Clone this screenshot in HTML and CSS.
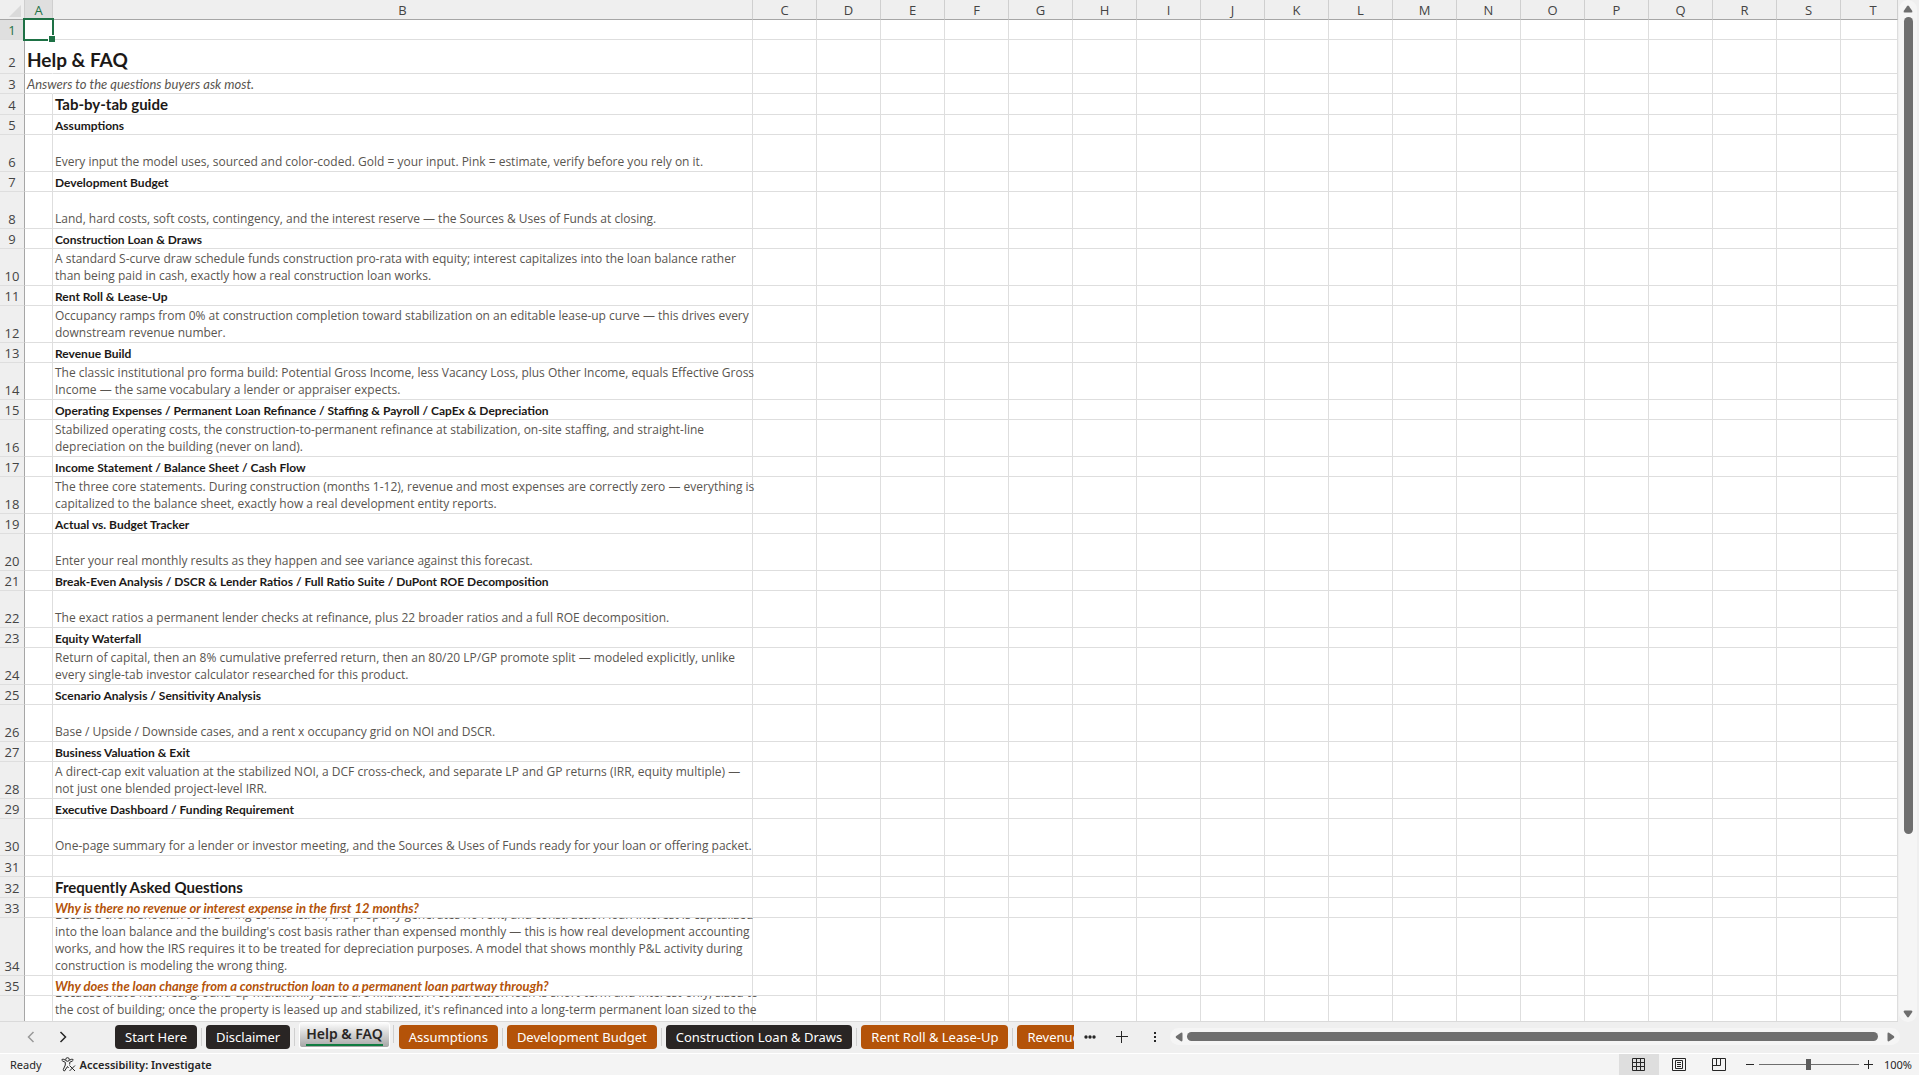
FILE: index.html
```html
<!DOCTYPE html>
<html lang="en">
<head>
<meta charset="utf-8">
<title>Help &amp; FAQ</title>
<link rel="stylesheet" href="styles.css">
</head>
<body>
<main class="workspace">
  <div class="sheet">
    <table class="grid">
      <colgroup id="cols"><col class="col-num"><col class="col-a"><col class="col-b"></colgroup>
      <thead><tr id="head"></tr></thead>
      <tbody id="rows"></tbody>
    </table>
  </div>
  <div class="vscroll">
    <button class="arrow" aria-label="Scroll up"><svg width="10" height="8" viewBox="0 0 10 8"><path d="M4 1.2Q5 0 6 1.2L9.300 6Q9.800 7.500 8.300 7.500H1.700Q.2 7.500.7 6Z"/></svg></button>
    <div class="vtrack"><div class="vthumb"></div></div>
    <button class="arrow" aria-label="Scroll down"><svg width="10" height="8" viewBox="0 0 10 8"><path d="M4 6.800Q5 8 6 6.800L9.300 2Q9.800.5 8.300.5H1.700Q.2.5.7 2Z"/></svg></button>
  </div>
</main>
<nav class="tabbar" aria-label="Sheets">
  <div class="tabnav">
    <button class="plain dim" aria-label="Previous sheets"><svg width="8" height="12" viewBox="0 0 8 12"><path d="M6.500 1L1.500 6L6.500 11"/></svg></button>
    <button class="plain" aria-label="Next sheets"><svg width="8" height="12" viewBox="0 0 8 12"><path d="M1.500 1L6.500 6L1.500 11"/></svg></button>
  </div>
  <div class="tabs">
    <button class="tab dark">Start Here</button>
    <button class="tab dark">Disclaimer</button>
    <button class="tab active"><span>Help &amp; FAQ</span></button>
    <button class="tab rust">Assumptions</button>
    <button class="tab rust">Development Budget</button>
    <button class="tab dark">Construction Loan &amp; Draws</button>
    <button class="tab rust">Rent Roll &amp; Lease-Up</button>
    <button class="tab rust">Revenue Build</button>
  </div>
  <div class="tabtools">
    <button class="plain" aria-label="More sheets"><svg width="12" height="4" viewBox="0 0 12 4"><g class="fill"><circle cx="2" cy="2" r="1.700"/><circle cx="6" cy="2" r="1.700"/><circle cx="10" cy="2" r="1.700"/></g></svg></button>
    <button class="plain" aria-label="New sheet"><svg width="12" height="12" viewBox="0 0 12 12"><path d="M5.500 0V12M0 5.500H12"/></svg></button>
    <button class="plain grip" aria-label="Resize tab bar"><svg width="2" height="12" viewBox="0 0 2 12"><path class="fill" d="M0 1h2v2H0zM0 5h2v2H0zM0 9h2v2H0z"/></svg></button>
  </div>
  <div class="hscroll">
    <button class="arrow" aria-label="Scroll left"><svg width="8" height="10" viewBox="0 0 8 10"><path d="M1.200 4Q0 5 1.200 6L6 9.300Q7.500 9.800 7.500 8.300V1.700Q7.500.2 6 .7Z"/></svg></button>
    <div class="hthumb"></div>
    <button class="arrow" aria-label="Scroll right"><svg width="8" height="10" viewBox="0 0 8 10"><path d="M6.800 4Q8 5 6.800 6L2 9.300Q.5 9.800.5 8.300V1.700Q.5.2 2 .7Z"/></svg></button>
  </div>
</nav>
<footer class="status">
  <span class="ready">Ready</span>
  <button class="access"><svg width="15" height="15" viewBox="0 0 15 15"><circle cx="6.500" cy="2.500" r="1.800"/><path d="M4.700 3.200L2.200 2.200Q.8 2 .8 3.200Q.9 3.900 4.300 5.300V8L2.300 12.500Q2.200 14 3.500 14L6.500 9.500L7.500 11M8.300 3.200L10.800 2.200Q12.200 2 12.200 3.200Q12.100 3.900 8.700 5.300V7.500M8.500 8.500L14 14M14 8.500L8.500 14"/></svg>Accessibility: Investigate</button>
  <div class="views">
    <button class="view on" aria-label="Normal view"><svg width="13" height="13" viewBox="0 0 13 13"><path d="M.5.5H12.500V12.500H.5ZM4.500.5V12.500M8.500.5V12.500M.5 4.500H12.500M.5 8.500H12.500"/></svg></button>
    <button class="view" aria-label="Page layout"><svg width="14" height="13" viewBox="0 0 14 13"><path d="M.5.5H13.500V12.500H.5ZM3.500 2.500H10.500V10.500H3.500ZM5 4.500H9M5 6.500H9M5 8.500H9"/></svg></button>
    <button class="view" aria-label="Page break preview"><svg width="14" height="13" viewBox="0 0 14 13"><path d="M.5.5H13.500V12.500H.5ZM.5 7.500H8.500V.5M4.500.5V7.500"/></svg></button>
  </div>
  <div class="zoom">
    <button class="plain" aria-label="Zoom out"><svg width="8" height="9" viewBox="0 0 8 9"><path d="M0 4.500H8"/></svg></button>
    <input type="range" min="0" max="100" value="50" aria-label="Zoom">
    <button class="plain" aria-label="Zoom in"><svg width="9" height="9" viewBox="0 0 9 9"><path d="M0 4.500H9M4.500 0V9"/></svg></button>
    <button class="pct">100%</button>
  </div>
</footer>
<script src="sheet.js"></script>
</body>
</html>
```
FILE: styles.css
```css
* { box-sizing: border-box; }
html, body { height: 100%; }
body {
  margin: 0;
  display: flex;
  flex-direction: column;
  overflow: hidden;
  background: #efefef;
  color: #262626;
  font-family: "Noto Sans", "Open Sans", sans-serif;
}
button {
  border: 0;
  padding: 0;
  margin: 0;
  background: none;
  color: inherit;
  font: inherit;
  display: flex;
  align-items: center;
  justify-content: center;
}
svg { display: block; fill: none; stroke: #262626; flex: none; }
svg .fill { fill: #262626; stroke: none; }

.workspace { flex: 1; min-height: 0; display: flex; }
.sheet { flex: 1; min-width: 0; overflow: hidden; border-bottom: 1px solid #dadada; }

.grid {
  width: 100%;
  table-layout: fixed;
  border-collapse: separate;
  border-spacing: 0;
  background: #fff;
  font-family: Lato, sans-serif;
}
.col-num { width: 25px; }
.col-a { width: 28px; }
.col-b { width: 700px; }
.col-std { width: 64px; }
.grid th, .grid td { padding: 0; border-right: 1px solid #dedede; border-bottom: 1px solid #dedede; }
.grid th { background: #efefef; font-family: "Open Sans", sans-serif; font-weight: 400; font-size: 13px; color: #444; }
.grid thead th {
  height: 20px;
  padding-top: 2px;
  line-height: 17px;
  border-bottom-color: #a6a6a6;
  border-right-color: #cfcfcf;
}
.grid thead th:last-child { padding-left: 8px; }
.grid tbody th { border-right-color: #a6a6a6; vertical-align: bottom; line-height: 18px; }
.grid tbody .title th { padding-bottom: 2px; }
.grid .sel { background: #dfdfdf; color: #1e7145; }
.corner svg { margin-left: auto; margin-right: 3px; fill: #dadada; stroke: none; }

.cell {
  height: 19px;
  padding-left: 2px;
  display: flex;
  align-items: flex-end;
  overflow-x: visible;
  overflow-y: clip;
  white-space: nowrap;
  font-size: 12px;
  line-height: 17px;
  color: #595550;
}
.h20 .cell { height: 20px; }
.h33 .cell { height: 33px; }
.h36 .cell { height: 36px; }
.h57 .cell { height: 57px; }
.h36 .cell, .h57 .cell { padding-bottom: 1px; font-family: "Open Sans", sans-serif; }
.title .cell { font-size: 19px; line-height: 26px; font-weight: 700; color: #1c1917; }
.note .cell { font-size: 13px; font-style: italic; }
.section .cell { font-size: 15px; line-height: 19px; font-weight: 700; color: #1c1917; }
.sub .cell { font-weight: 700; color: #1c1917; }
.faq .cell { font-size: 13px; font-weight: 700; font-style: italic; color: #b45309; }
.title td:nth-child(2), .note td:nth-child(2) { border-right-color: transparent; }
.title td:nth-child(2) .cell, .note td:nth-child(2) .cell { width: 0; }

.current { position: relative; }
.cursor {
  position: absolute;
  inset: -2px -2px -2px -2px;
  border: 2px solid #1e7145;
}
.cursor::after {
  content: "";
  position: absolute;
  right: -3px;
  bottom: -3px;
  width: 6px;
  height: 6px;
  background: #1e7145;
  border: solid #fff;
  border-width: 1px 0 0 1px;
}

.vscroll { width: 21px; padding: 0 2px 0 1px; display: flex; flex-direction: column; }
.arrow { flex: none; }
.arrow svg { fill: #6e6e6e; stroke: none; }
.vscroll .arrow { height: 17px; background: #f5f5f5; }
.vscroll .arrow:first-child { border-radius: 9px 9px 0 0; }
.vscroll .arrow:last-child { border-radius: 0 0 9px 9px; }
.vtrack { flex: 1; background: #f5f5f5; display: flex; justify-content: center; }
.vthumb { width: 9px; height: calc(83% - 3px); border-radius: 5px; background: #6e6e6e; }

.tabbar { height: 31px; flex: none; display: flex; align-items: flex-start; }
.tabnav { width: 110px; height: 30px; flex: none; padding-left: 27px; display: flex; align-items: center; gap: 24px; }
.tabnav svg { stroke-width: 1.500; }
.dim svg { stroke: #999; }
.tabs { flex: 0 1 964px; min-width: 0; height: 31px; overflow: hidden; display: flex; }
.tab {
  flex: none;
  height: 24px;
  margin: 3px 4px 0 5px;
  padding: 0 10px;
  border-radius: 4px;
  position: relative;
  font-size: 13px;
  white-space: nowrap;
  color: #fff;
}
.tab::after { content: ""; position: absolute; right: -5px; top: 3px; width: 1px; height: 18px; background: #cfcfcf; }
.dark { background: #292524; }
.rust { background: #b45309; }
.active {
  height: 27px;
  margin-top: 0;
  padding: 0 6px 1px;
  align-items: flex-end;
  border: solid #fff;
  border-width: 0 1px 2px;
  background: linear-gradient(#fff, #a6a6a6);
  color: #292524;
  font-size: 14px;
  font-weight: 600;
}
.active span { border-bottom: 2px solid #107c41; line-height: 20px; }
.tabtools { width: 96px; height: 30px; flex: none; padding-left: 10px; display: flex; align-items: center; gap: 20px; }
.grip { margin-left: 6px; }
.hscroll {
  flex: 1;
  height: 17px;
  margin: 6px 19px 0 0;
  padding: 0 5px;
  border-radius: 9px;
  background: #f5f5f5;
  display: flex;
  align-items: center;
  gap: 4px;
}
.hthumb { flex: 1; height: 9px; border-radius: 5px; background: #6e6e6e; }
.hscroll .arrow:last-child { margin-left: 5px; }

.status {
  height: 22px;
  flex: none;
  padding: 0 7px 0 10px;
  border-top: 1px solid #fff;
  background: #f4f4f4;
  display: flex;
  align-items: center;
  font-size: 11px;
}
.access { margin-left: 19px; gap: 4px; font-weight: 600; }
.views { height: 21px; margin-left: auto; display: flex; }
.view { width: 40px; }
.on { background: #dedede; }
.zoom { margin-left: 7px; display: flex; align-items: center; gap: 5px; }
.zoom input {
  appearance: none;
  width: 100px;
  height: 11px;
  margin: 0;
  background: linear-gradient(#6e6e6e, #6e6e6e) center / 100% 1px no-repeat;
}
.zoom input::-webkit-slider-thumb { appearance: none; width: 5px; height: 11px; background: #5c5c5c; }
.pct { margin-left: 6px; }
```
FILE: sheet.js
```js
const LETTERS = "ABCDEFGHIJKLMNOPQRST".split("");

// Each row: [row class, text of column A, text of column B]
const ROWS = [
  ["", "", ""],
  ["title h33", "Help &amp; FAQ", ""],
  ["note", "Answers to the questions buyers ask most.", ""],
  ["section h20", "", "Tab-by-tab guide"],
  ["sub", "", "Assumptions"],
  ["h36", "", "Every input the model uses, sourced and color-coded. Gold = your input. Pink = estimate, verify before you rely on it."],
  ["sub", "", "Development Budget"],
  ["h36", "", "Land, hard costs, soft costs, contingency, and the interest reserve — the Sources &amp; Uses of Funds at closing."],
  ["sub", "", "Construction Loan &amp; Draws"],
  ["h36", "", "A standard S-curve draw schedule funds construction pro-rata with equity; interest capitalizes into the loan balance rather<br>than being paid in cash, exactly how a real construction loan works."],
  ["sub", "", "Rent Roll &amp; Lease-Up"],
  ["h36", "", "Occupancy ramps from 0% at construction completion toward stabilization on an editable lease-up curve — this drives every<br>downstream revenue number."],
  ["sub", "", "Revenue Build"],
  ["h36", "", "The classic institutional pro forma build: Potential Gross Income, less Vacancy Loss, plus Other Income, equals Effective Gross<br>Income — the same vocabulary a lender or appraiser expects."],
  ["sub", "", "Operating Expenses / Permanent Loan Refinance / Staffing &amp; Payroll / CapEx &amp; Depreciation"],
  ["h36", "", "Stabilized operating costs, the construction-to-permanent refinance at stabilization, on-site staffing, and straight-line<br>depreciation on the building (never on land)."],
  ["sub", "", "Income Statement / Balance Sheet / Cash Flow"],
  ["h36", "", "The three core statements. During construction (months 1-12), revenue and most expenses are correctly zero — everything is<br>capitalized to the balance sheet, exactly how a real development entity reports."],
  ["sub", "", "Actual vs. Budget Tracker"],
  ["h36", "", "Enter your real monthly results as they happen and see variance against this forecast."],
  ["sub", "", "Break-Even Analysis / DSCR &amp; Lender Ratios / Full Ratio Suite / DuPont ROE Decomposition"],
  ["h36", "", "The exact ratios a permanent lender checks at refinance, plus 22 broader ratios and a full ROE decomposition."],
  ["sub", "", "Equity Waterfall"],
  ["h36", "", "Return of capital, then an 8% cumulative preferred return, then an 80/20 LP/GP promote split — modeled explicitly, unlike<br>every single-tab investor calculator researched for this product."],
  ["sub", "", "Scenario Analysis / Sensitivity Analysis"],
  ["h36", "", "Base / Upside / Downside cases, and a rent x occupancy grid on NOI and DSCR."],
  ["sub", "", "Business Valuation &amp; Exit"],
  ["h36", "", "A direct-cap exit valuation at the stabilized NOI, a DCF cross-check, and separate LP and GP returns (IRR, equity multiple) —<br>not just one blended project-level IRR."],
  ["sub", "", "Executive Dashboard / Funding Requirement"],
  ["h36", "", "One-page summary for a lender or investor meeting, and the Sources &amp; Uses of Funds ready for your loan or offering packet."],
  ["h20", "", ""],
  ["section h20", "", "Frequently Asked Questions"],
  ["faq", "", "Why is there no revenue or interest expense in the first 12 months?"],
  ["h57", "", "Because there shouldn't be. During construction, the property generates no rent, and construction loan interest is capitalized<br>into the loan balance and the building's cost basis rather than expensed monthly — this is how real development accounting<br>works, and how the IRS requires it to be treated for depreciation purposes. A model that shows monthly P&amp;L activity during<br>construction is modeling the wrong thing."],
  ["faq", "", "Why does the loan change from a construction loan to a permanent loan partway through?"],
  ["h57", "", "Because that's how real ground-up multifamily deals are financed. A construction loan is short-term and interest-only, sized to<br>the cost of building; once the property is leased up and stabilized, it's refinanced into a long-term permanent loan sized to the<br>stabilized income of the property.<br>&nbsp;"]
];

const cols = document.getElementById("cols");
LETTERS.slice(2).forEach((letter) => {
  const col = document.createElement("col");
  if (letter !== "T") col.className = "col-std";
  cols.append(col);
});

document.getElementById("head").innerHTML =
  '<th class="corner"><svg width="12" height="12" viewBox="0 0 12 12"><path d="M12 0V12H0Z"/></svg></th>' +
  LETTERS.map((l) => `<th scope="col"${l === "A" ? ' class="sel"' : ""}>${l}</th>`).join("");

const blanks = "<td></td>".repeat(LETTERS.length - 2);
document.getElementById("rows").innerHTML = ROWS.map(([cls, a, b], i) => {
  const first = i === 0;
  return `<tr class="${cls}"><th scope="row"${first ? ' class="sel"' : ""}>${i + 1}</th>` +
    `<td${first ? ' class="current"' : ""}><div class="cell"><span>${a}</span></div>${first ? '<div class="cursor"></div>' : ""}</td>` +
    `<td><div class="cell"><span>${b}</span></div></td>${blanks}</tr>`;
}).join("");
```
